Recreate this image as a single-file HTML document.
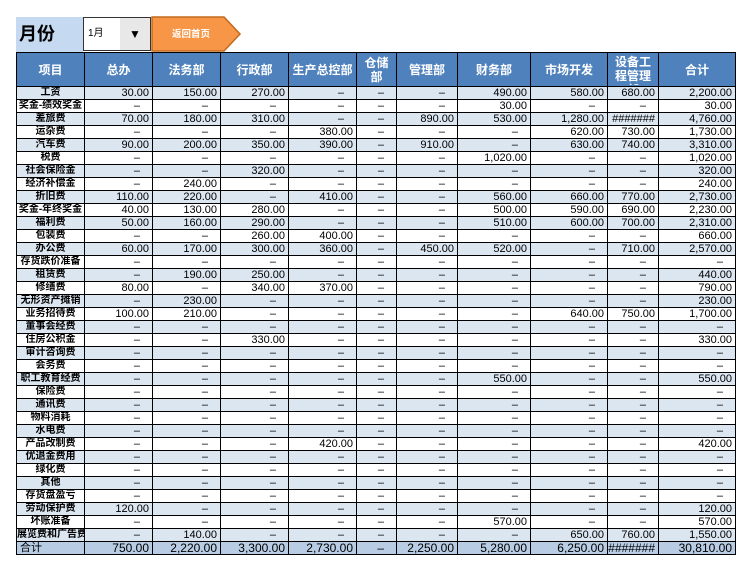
<!DOCTYPE html>
<html><head><meta charset="utf-8"><style>
body{margin:0;width:751px;height:570px;background:#fff;font-family:"Liberation Sans","Noto Sans CJK SC",sans-serif;position:relative;overflow:hidden}
.month{position:absolute;left:16px;top:17px;width:67px;height:35px;background:#c5d9f1;font-size:18px;font-weight:bold;line-height:35px;padding-left:3px;box-sizing:border-box}
.dd{position:absolute;left:83px;top:17px;width:68px;height:34px;background:#fff;border:1px solid #333;box-sizing:border-box;font-size:10px;line-height:32px;padding-left:4px}
.dd .b{position:absolute;right:0;top:0;width:30px;height:32px;background:#e8e8e8;text-align:center;font-size:12px;line-height:32px}
.btn{position:absolute;left:151px;top:16px}
table{position:absolute;left:16px;top:52px;border-collapse:collapse;table-layout:fixed;width:720px}
th{background:#4f81bd;color:#fff;font-size:12px;font-weight:bold;height:33px;border:1px solid #000;padding:0;overflow:hidden;line-height:14px}
td{height:12px;border:1px solid #000;padding:0 3px 0 0;font-size:11px;line-height:12px;text-align:right;white-space:nowrap;overflow:hidden}
td:first-child{text-align:center;font-weight:bold;font-size:10px;padding:0}
tr:nth-child(odd) td{background:#dce6f1}
tr.t td{background:#b8cce4;font-size:12px}
tr.t td:first-child{text-align:left;font-weight:normal;font-size:11px;padding-left:3px}
.d{padding-right:12px}
</style></head><body>
<div class="month">月份</div>
<div class="dd">1月<div class="b">▼</div></div>
<svg class="btn" width="92" height="37"><polygon points="1,1 73,1 89,18 73,35 1,35" fill="#f79646" stroke="#c26a1e" stroke-width="1.5"/><text x="40" y="21" font-size="9.5" font-weight="bold" fill="#fff" text-anchor="middle" font-family="Liberation Sans,Noto Sans CJK SC,sans-serif">返回首页</text></svg>
<table>
<colgroup><col style="width:68px"><col style="width:68px"><col style="width:68px"><col style="width:68px"><col style="width:68px"><col style="width:40px"><col style="width:61px"><col style="width:73px"><col style="width:77px"><col style="width:51px"><col style="width:77px"></colgroup>
<thead><tr><th>项目</th><th>总办</th><th>法务部</th><th>行政部</th><th>生产总控部</th><th>仓储<br>部</th><th>管理部</th><th>财务部</th><th>市场开发</th><th><div style="height:30px;overflow:hidden">设备工<br>程管理<br>部</div></th><th>合计</th></tr></thead>
<tbody>
<tr><td>工资</td><td>30.00</td><td>150.00</td><td>270.00</td><td class="d">–</td><td class="d">–</td><td class="d">–</td><td>490.00</td><td>580.00</td><td>680.00</td><td>2,200.00</td></tr>
<tr><td>奖金-绩效奖金</td><td class="d">–</td><td class="d">–</td><td class="d">–</td><td class="d">–</td><td class="d">–</td><td class="d">–</td><td>30.00</td><td class="d">–</td><td class="d">–</td><td>30.00</td></tr>
<tr><td>差旅费</td><td>70.00</td><td>180.00</td><td>310.00</td><td class="d">–</td><td class="d">–</td><td>890.00</td><td>530.00</td><td>1,280.00</td><td>#######</td><td>4,760.00</td></tr>
<tr><td>运杂费</td><td class="d">–</td><td class="d">–</td><td class="d">–</td><td>380.00</td><td class="d">–</td><td class="d">–</td><td class="d">–</td><td>620.00</td><td>730.00</td><td>1,730.00</td></tr>
<tr><td>汽车费</td><td>90.00</td><td>200.00</td><td>350.00</td><td>390.00</td><td class="d">–</td><td>910.00</td><td class="d">–</td><td>630.00</td><td>740.00</td><td>3,310.00</td></tr>
<tr><td>税费</td><td class="d">–</td><td class="d">–</td><td class="d">–</td><td class="d">–</td><td class="d">–</td><td class="d">–</td><td>1,020.00</td><td class="d">–</td><td class="d">–</td><td>1,020.00</td></tr>
<tr><td>社会保险金</td><td class="d">–</td><td class="d">–</td><td>320.00</td><td class="d">–</td><td class="d">–</td><td class="d">–</td><td class="d">–</td><td class="d">–</td><td class="d">–</td><td>320.00</td></tr>
<tr><td>经济补偿金</td><td class="d">–</td><td>240.00</td><td class="d">–</td><td class="d">–</td><td class="d">–</td><td class="d">–</td><td class="d">–</td><td class="d">–</td><td class="d">–</td><td>240.00</td></tr>
<tr><td>折旧费</td><td>110.00</td><td>220.00</td><td class="d">–</td><td>410.00</td><td class="d">–</td><td class="d">–</td><td>560.00</td><td>660.00</td><td>770.00</td><td>2,730.00</td></tr>
<tr><td>奖金-年终奖金</td><td>40.00</td><td>130.00</td><td>280.00</td><td class="d">–</td><td class="d">–</td><td class="d">–</td><td>500.00</td><td>590.00</td><td>690.00</td><td>2,230.00</td></tr>
<tr><td>福利费</td><td>50.00</td><td>160.00</td><td>290.00</td><td class="d">–</td><td class="d">–</td><td class="d">–</td><td>510.00</td><td>600.00</td><td>700.00</td><td>2,310.00</td></tr>
<tr><td>包装费</td><td class="d">–</td><td class="d">–</td><td>260.00</td><td>400.00</td><td class="d">–</td><td class="d">–</td><td class="d">–</td><td class="d">–</td><td class="d">–</td><td>660.00</td></tr>
<tr><td>办公费</td><td>60.00</td><td>170.00</td><td>300.00</td><td>360.00</td><td class="d">–</td><td>450.00</td><td>520.00</td><td class="d">–</td><td>710.00</td><td>2,570.00</td></tr>
<tr><td>存货跌价准备</td><td class="d">–</td><td class="d">–</td><td class="d">–</td><td class="d">–</td><td class="d">–</td><td class="d">–</td><td class="d">–</td><td class="d">–</td><td class="d">–</td><td class="d">–</td></tr>
<tr><td>租赁费</td><td class="d">–</td><td>190.00</td><td>250.00</td><td class="d">–</td><td class="d">–</td><td class="d">–</td><td class="d">–</td><td class="d">–</td><td class="d">–</td><td>440.00</td></tr>
<tr><td>修缮费</td><td>80.00</td><td class="d">–</td><td>340.00</td><td>370.00</td><td class="d">–</td><td class="d">–</td><td class="d">–</td><td class="d">–</td><td class="d">–</td><td>790.00</td></tr>
<tr><td>无形资产摊销</td><td class="d">–</td><td>230.00</td><td class="d">–</td><td class="d">–</td><td class="d">–</td><td class="d">–</td><td class="d">–</td><td class="d">–</td><td class="d">–</td><td>230.00</td></tr>
<tr><td>业务招待费</td><td>100.00</td><td>210.00</td><td class="d">–</td><td class="d">–</td><td class="d">–</td><td class="d">–</td><td class="d">–</td><td>640.00</td><td>750.00</td><td>1,700.00</td></tr>
<tr><td>董事会经费</td><td class="d">–</td><td class="d">–</td><td class="d">–</td><td class="d">–</td><td class="d">–</td><td class="d">–</td><td class="d">–</td><td class="d">–</td><td class="d">–</td><td class="d">–</td></tr>
<tr><td>住房公积金</td><td class="d">–</td><td class="d">–</td><td>330.00</td><td class="d">–</td><td class="d">–</td><td class="d">–</td><td class="d">–</td><td class="d">–</td><td class="d">–</td><td>330.00</td></tr>
<tr><td>审计咨询费</td><td class="d">–</td><td class="d">–</td><td class="d">–</td><td class="d">–</td><td class="d">–</td><td class="d">–</td><td class="d">–</td><td class="d">–</td><td class="d">–</td><td class="d">–</td></tr>
<tr><td>会务费</td><td class="d">–</td><td class="d">–</td><td class="d">–</td><td class="d">–</td><td class="d">–</td><td class="d">–</td><td class="d">–</td><td class="d">–</td><td class="d">–</td><td class="d">–</td></tr>
<tr><td>职工教育经费</td><td class="d">–</td><td class="d">–</td><td class="d">–</td><td class="d">–</td><td class="d">–</td><td class="d">–</td><td>550.00</td><td class="d">–</td><td class="d">–</td><td>550.00</td></tr>
<tr><td>保险费</td><td class="d">–</td><td class="d">–</td><td class="d">–</td><td class="d">–</td><td class="d">–</td><td class="d">–</td><td class="d">–</td><td class="d">–</td><td class="d">–</td><td class="d">–</td></tr>
<tr><td>通讯费</td><td class="d">–</td><td class="d">–</td><td class="d">–</td><td class="d">–</td><td class="d">–</td><td class="d">–</td><td class="d">–</td><td class="d">–</td><td class="d">–</td><td class="d">–</td></tr>
<tr><td>物料消耗</td><td class="d">–</td><td class="d">–</td><td class="d">–</td><td class="d">–</td><td class="d">–</td><td class="d">–</td><td class="d">–</td><td class="d">–</td><td class="d">–</td><td class="d">–</td></tr>
<tr><td>水电费</td><td class="d">–</td><td class="d">–</td><td class="d">–</td><td class="d">–</td><td class="d">–</td><td class="d">–</td><td class="d">–</td><td class="d">–</td><td class="d">–</td><td class="d">–</td></tr>
<tr><td>产品改制费</td><td class="d">–</td><td class="d">–</td><td class="d">–</td><td>420.00</td><td class="d">–</td><td class="d">–</td><td class="d">–</td><td class="d">–</td><td class="d">–</td><td>420.00</td></tr>
<tr><td>优退金费用</td><td class="d">–</td><td class="d">–</td><td class="d">–</td><td class="d">–</td><td class="d">–</td><td class="d">–</td><td class="d">–</td><td class="d">–</td><td class="d">–</td><td class="d">–</td></tr>
<tr><td>绿化费</td><td class="d">–</td><td class="d">–</td><td class="d">–</td><td class="d">–</td><td class="d">–</td><td class="d">–</td><td class="d">–</td><td class="d">–</td><td class="d">–</td><td class="d">–</td></tr>
<tr><td>其他</td><td class="d">–</td><td class="d">–</td><td class="d">–</td><td class="d">–</td><td class="d">–</td><td class="d">–</td><td class="d">–</td><td class="d">–</td><td class="d">–</td><td class="d">–</td></tr>
<tr><td>存货盘盈亏</td><td class="d">–</td><td class="d">–</td><td class="d">–</td><td class="d">–</td><td class="d">–</td><td class="d">–</td><td class="d">–</td><td class="d">–</td><td class="d">–</td><td class="d">–</td></tr>
<tr><td>劳动保护费</td><td>120.00</td><td class="d">–</td><td class="d">–</td><td class="d">–</td><td class="d">–</td><td class="d">–</td><td class="d">–</td><td class="d">–</td><td class="d">–</td><td>120.00</td></tr>
<tr><td>坏账准备</td><td class="d">–</td><td class="d">–</td><td class="d">–</td><td class="d">–</td><td class="d">–</td><td class="d">–</td><td>570.00</td><td class="d">–</td><td class="d">–</td><td>570.00</td></tr>
<tr><td>展览费和广告费</td><td class="d">–</td><td>140.00</td><td class="d">–</td><td class="d">–</td><td class="d">–</td><td class="d">–</td><td class="d">–</td><td>650.00</td><td>760.00</td><td>1,550.00</td></tr>
<tr class="t"><td>合计</td><td>750.00</td><td>2,220.00</td><td>3,300.00</td><td>2,730.00</td><td class="d">–</td><td>2,250.00</td><td>5,280.00</td><td>6,250.00</td><td>#######</td><td>30,810.00</td></tr>
</tbody></table>
</body></html>
